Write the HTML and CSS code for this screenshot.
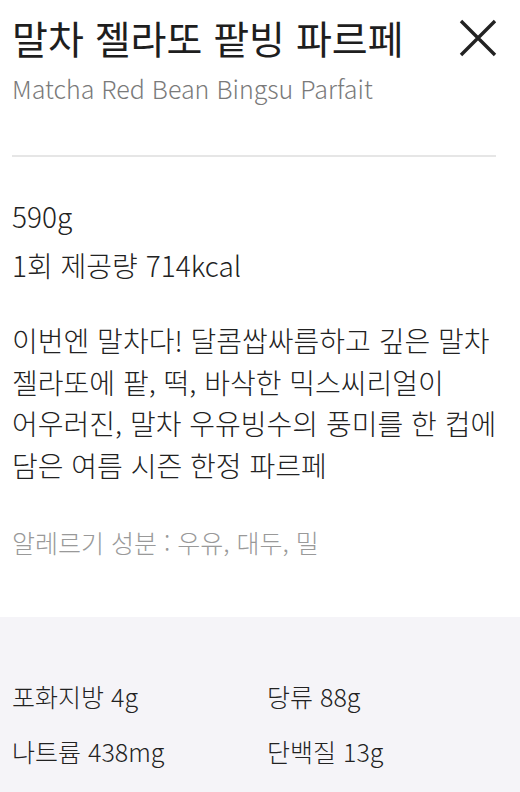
FILE: index.html
```html
<!DOCTYPE html>
<html lang="ko">
<head>
<meta charset="utf-8">
<link rel="stylesheet" href="styles.css">
</head>
<body>
<div class="sheet">
  <div class="content">
    <div class="head">
      <h1 class="title">말차 젤라또 팥빙 파르페</h1>
      <svg class="close" viewBox="0 0 38 38" width="38" height="38" aria-label="닫기">
        <path d="M2 2 L36 36 M36 2 L2 36" stroke="#222" stroke-width="3.4" fill="none"/>
      </svg>
    </div>
    <p class="subtitle">Matcha Red Bean Bingsu Parfait</p>
    <hr class="divider">
    <div class="specs">
      <p class="spec">590g</p>
      <p class="spec">1회 제공량 714kcal</p>
    </div>
    <p class="desc">이번엔 말차다! 달콤쌉싸름하고 깊은 말차 젤라또에 팥, 떡, 바삭한 믹스씨리얼이 어우러진, 말차 우유빙수의 풍미를 한 컵에 담은 여름 시즌 한정 파르페</p>
    <p class="allergy">알레르기 성분 : 우유, 대두, 밀</p>
  </div>
  <div class="nutrition">
    <div class="grid">
      <span class="item">포화지방 4g</span>
      <span class="item">당류 88g</span>
      <span class="item">나트륨 438mg</span>
      <span class="item">단백질 13g</span>
    </div>
  </div>
</div>
</body>
</html>
```

FILE: styles.css
```css
html, body {
  margin: 0;
  padding: 0;
  background: #fff;
}
body {
  font-family: "Noto Sans CJK KR", "Noto Sans", sans-serif;
  color: #222;
}
.sheet {
  width: 520px;
  min-height: 792px;
  display: flex;
  flex-direction: column;
}
.content {
  padding: 0 24px 0 12px;
}
.head {
  display: flex;
  justify-content: space-between;
  align-items: flex-start;
  padding-top: 11px;
}
.title {
  margin: 0;
  font-size: 39px;
  font-weight: 400;
  line-height: 52px;
  color: #1e1e1e;
}
.close {
  margin-top: 8px;
  margin-right: -1px;
  display: block;
}
.subtitle {
  margin: 8px 0 0;
  font-size: 25px;
  font-weight: 300;
  line-height: 34px;
  color: #7a7a7a;
}
.divider {
  border: 0;
  height: 2px;
  background: #e6e6e6;
  margin: 50px 0 0;
}
.specs {
  margin-top: 40px;
  display: flex;
  flex-direction: column;
  gap: 11px;
}
.spec {
  margin: 0;
  font-size: 28px;
  font-weight: 300;
  line-height: 38px;
}
.desc {
  margin: 36px -8px 0 0;
  font-size: 28px;
  font-weight: 300;
  line-height: 41.7px;
  word-break: keep-all;
}
.allergy {
  margin: 38px 0 0;
  font-size: 25px;
  font-weight: 300;
  line-height: 34px;
  color: #999;
}
.nutrition {
  margin-top: 58px;
  flex: 1;
  background: #f5f4f8;
  padding: 62px 0 20px 12px;
}
.grid {
  display: grid;
  grid-template-columns: 255px 1fr;
  row-gap: 20px;
}
.item {
  font-size: 25px;
  font-weight: 300;
  line-height: 35px;
  color: #222;
}
```
